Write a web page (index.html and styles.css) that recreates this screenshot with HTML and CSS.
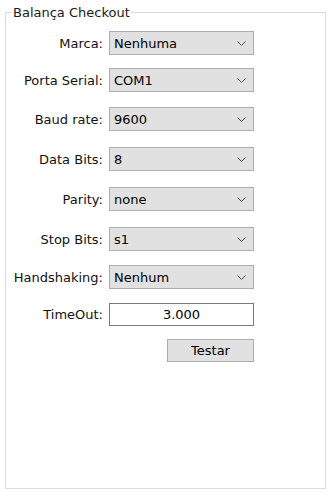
FILE: index.html
```html
<!DOCTYPE html>
<html>
<head>
<meta charset="utf-8">
<link rel="stylesheet" href="styles.css">
</head>
<body>
<fieldset class="frame">
  <legend class="legend">Balança Checkout</legend>
  <div class="form">
    <div class="row r1"><span class="label">Marca:</span><div class="select"><span>Nenhuma</span><svg class="chev" width="9" height="5" viewBox="0 0 9 5"><path d="M0.5 0.5 L4.5 4.5 L8.5 0.5" fill="none" stroke="#555" stroke-width="1"/></svg></div></div>
    <div class="row r2"><span class="label">Porta Serial:</span><div class="select"><span>COM1</span><svg class="chev" width="9" height="5" viewBox="0 0 9 5"><path d="M0.5 0.5 L4.5 4.5 L8.5 0.5" fill="none" stroke="#555" stroke-width="1"/></svg></div></div>
    <div class="row r3"><span class="label">Baud rate:</span><div class="select"><span>9600</span><svg class="chev" width="9" height="5" viewBox="0 0 9 5"><path d="M0.5 0.5 L4.5 4.5 L8.5 0.5" fill="none" stroke="#555" stroke-width="1"/></svg></div></div>
    <div class="row r4"><span class="label">Data Bits:</span><div class="select"><span>8</span><svg class="chev" width="9" height="5" viewBox="0 0 9 5"><path d="M0.5 0.5 L4.5 4.5 L8.5 0.5" fill="none" stroke="#555" stroke-width="1"/></svg></div></div>
    <div class="row r5"><span class="label">Parity:</span><div class="select"><span>none</span><svg class="chev" width="9" height="5" viewBox="0 0 9 5"><path d="M0.5 0.5 L4.5 4.5 L8.5 0.5" fill="none" stroke="#555" stroke-width="1"/></svg></div></div>
    <div class="row r6"><span class="label">Stop Bits:</span><div class="select"><span>s1</span><svg class="chev" width="9" height="5" viewBox="0 0 9 5"><path d="M0.5 0.5 L4.5 4.5 L8.5 0.5" fill="none" stroke="#555" stroke-width="1"/></svg></div></div>
    <div class="row r7"><span class="label">Handshaking:</span><div class="select"><span>Nenhum</span><svg class="chev" width="9" height="5" viewBox="0 0 9 5"><path d="M0.5 0.5 L4.5 4.5 L8.5 0.5" fill="none" stroke="#555" stroke-width="1"/></svg></div></div>
    <div class="row r8"><span class="label">TimeOut:</span><div class="input">3.000</div></div>
    <div class="row r9"><span class="label"></span><div class="btnwrap"><button class="btn">Testar</button></div></div>
  </div>
</fieldset>
</body>
</html>
```
FILE: styles.css
```css
html, body { margin: 0; padding: 0; background: #fff; }
body {
  font-family: "DejaVu Sans", Verdana, sans-serif;
  font-size: 13px;
  color: #000;
  padding-top: 5px;
}
.frame {
  margin: 0 0 0 5px;
  width: 321px;
  height: 484px;
  box-sizing: border-box;
  border: 1px solid #dcdcdc;
  padding: 0;
}
.legend {
  margin-left: 6px;
  padding: 0 1px;
  line-height: 15px;
  color: #1a1a1a;
}
.form {
  display: flex;
  flex-direction: column;
}
.row {
  display: flex;
  align-items: center;
  height: 24px;
}
.r1 { margin-top: 11px; }
.r2 { margin-top: 13px; }
.r3 { margin-top: 15px; }
.r4 { margin-top: 16px; }
.r5 { margin-top: 16px; }
.r6 { margin-top: 16px; }
.r7 { margin-top: 14px; }
.r8 { margin-top: 14px; height: 23px; }
.r9 { margin-top: 13px; height: 23px; }
.label {
  width: 97px;
  text-align: right;
  padding-right: 6px;
  color: #111;
  white-space: nowrap;
}
.select {
  width: 145px;
  height: 24px;
  box-sizing: border-box;
  background: #e1e1e1;
  border: 1px solid #adadad;
  display: flex;
  align-items: center;
  justify-content: space-between;
  padding: 0 7px 0 4px;
}
.chev { display: block; }
.input {
  width: 145px;
  height: 23px;
  box-sizing: border-box;
  border: 1px solid #7a7a7a;
  background: #fff;
  display: flex;
  align-items: center;
  justify-content: center;
}
.btnwrap {
  width: 145px;
  display: flex;
  justify-content: flex-end;
}
.btn {
  width: 87px;
  height: 23px;
  box-sizing: border-box;
  background: #e1e1e1;
  border: 1px solid #adadad;
  font-family: inherit;
  font-size: 13px;
  color: #000;
  padding: 0;
  border-radius: 0;
}
```
